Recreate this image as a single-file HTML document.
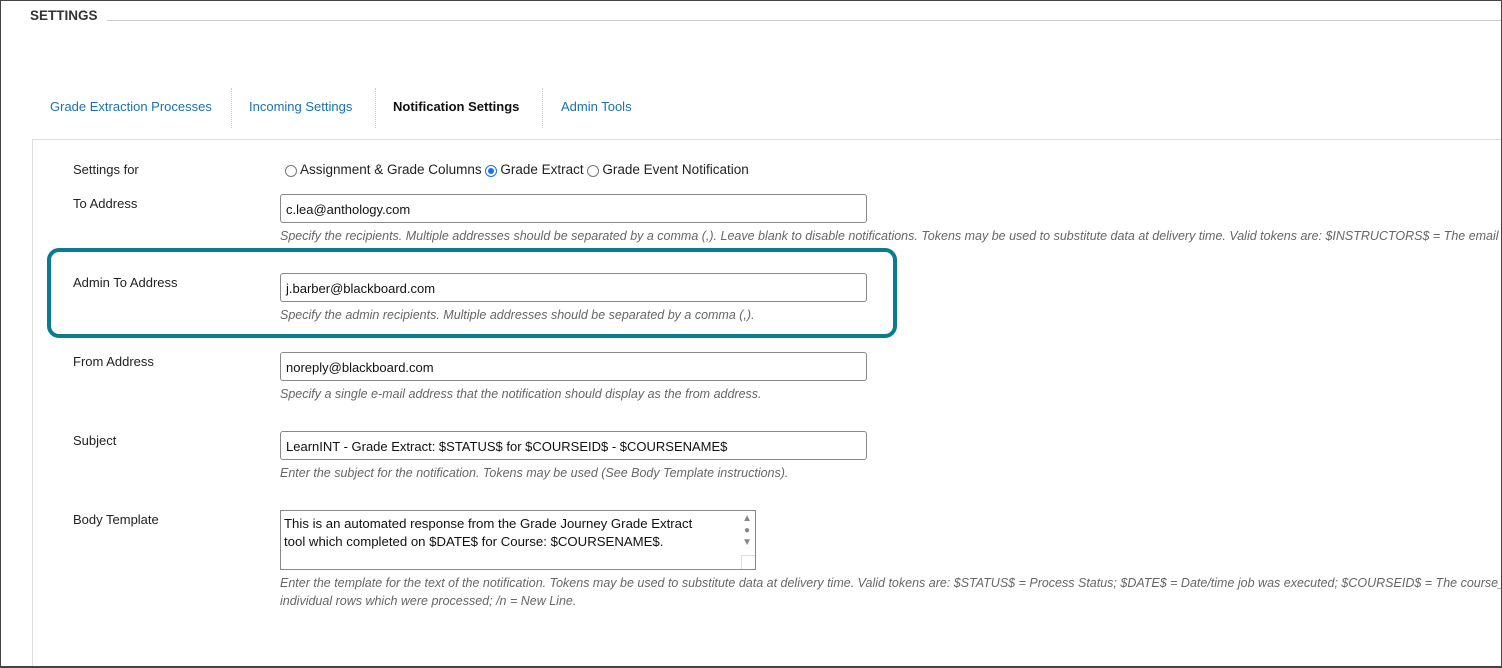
<!DOCTYPE html>
<html><head><meta charset="utf-8"><style>
*{box-sizing:border-box;margin:0;padding:0}
body{width:1502px;height:668px;overflow:hidden;background:#fff;font-family:"Liberation Sans",sans-serif;color:#222;position:relative}
#frame{position:absolute;left:0;top:0;width:1502px;height:668px;overflow:hidden}
#bd{position:absolute;left:0;top:0;width:1502px;height:668px;border:1px solid #444;border-bottom-width:2px;z-index:5}
.a{position:absolute;white-space:nowrap}
.lbl{font-size:13px;color:#222}
.tab{font-size:13px;color:#1a73a8;top:99px}
.sep{position:absolute;top:88px;height:40px;border-left:1px dotted #ccc}
.inp{position:absolute;left:280px;width:587px;height:29px;border:1px solid #888;border-radius:3px;font-size:13px;padding:7px 0 0 5px;color:#111;background:#fff}
.help{position:absolute;left:280px;font-size:12.5px;font-style:italic;color:#666;white-space:nowrap}
.rad{display:inline-block;width:12px;height:12px;border:1px solid #777;border-radius:50%;vertical-align:-2px;margin:0 3px 0 0;position:relative;top:1px}
.rad.on{border-color:#1a73e8}
.rad.on::after{content:"";position:absolute;left:2px;top:2px;width:6px;height:6px;border-radius:50%;background:#1a73e8}
</style></head><body><div id="frame">
<div class="a" style="left:30px;top:8px;font-size:13.5px;font-weight:bold;color:#333">SETTINGS</div>
<div style="position:absolute;left:107px;top:20px;right:0;border-top:1px solid #ccc"></div>

<div class="a tab" style="left:50px">Grade Extraction Processes</div>
<div class="sep" style="left:231px"></div>
<div class="a tab" style="left:249px">Incoming Settings</div>
<div class="sep" style="left:375px"></div>
<div class="a tab" style="left:393px;color:#111;font-weight:bold">Notification Settings</div>
<div class="sep" style="left:542px"></div>
<div class="a tab" style="left:561px">Admin Tools</div>

<div style="position:absolute;left:32px;top:139px;width:1480px;height:540px;border:1px solid #ddd"></div>

<div class="a lbl" style="left:73px;top:162px">Settings for</div>
<div class="a" style="left:285px;top:162px;font-size:13.5px;color:#222"><span class="rad"></span>Assignment &amp; Grade Columns <span class="rad on"></span>Grade Extract <span class="rad"></span>Grade Event Notification</div>

<div class="a lbl" style="left:73px;top:196px">To Address</div>
<div class="inp" style="top:194px">c.lea@anthology.com</div>
<div class="help" style="top:229px">Specify the recipients. Multiple addresses should be separated by a comma (,). Leave blank to disable notifications. Tokens may be used to substitute data at delivery time. Valid tokens are: $INSTRUCTORS$ = The email address</div>

<div style="position:absolute;left:47px;top:248px;width:850px;height:90px;border:4px solid #0b7c90;border-radius:12px"></div>
<div class="a lbl" style="left:73px;top:275px">Admin To Address</div>
<div class="inp" style="top:273px">j.barber@blackboard.com</div>
<div class="help" style="top:308px">Specify the admin recipients. Multiple addresses should be separated by a comma (,).</div>

<div class="a lbl" style="left:73px;top:354px">From Address</div>
<div class="inp" style="top:352px">noreply@blackboard.com</div>
<div class="help" style="top:387px">Specify a single e-mail address that the notification should display as the from address.</div>

<div class="a lbl" style="left:73px;top:433px">Subject</div>
<div class="inp" style="top:431px">LearnINT - Grade Extract: $STATUS$ for $COURSEID$ - $COURSENAME$</div>
<div class="help" style="top:466px">Enter the subject for the notification. Tokens may be used (See Body Template instructions).</div>

<div class="a lbl" style="left:73px;top:512px">Body Template</div>
<div style="position:absolute;left:280px;top:510px;width:476px;height:60px;border:1px solid #888;font-size:13.2px;line-height:18px;padding:4px 0 0 3px;color:#111">This is an automated response from the Grade Journey Grade Extract<br>tool which completed on $DATE$ for Course: $COURSENAME$.
<div style="position:absolute;right:3px;top:2px;font-size:10px;color:#888;line-height:12px;text-align:center">▲<br>●<br>▼</div>
<div style="position:absolute;right:0;bottom:0;width:14px;height:14px;border-left:1px solid #ddd;border-top:1px solid #ddd"></div></div>
<div class="help" style="top:574px;line-height:18px">Enter the template for the text of the notification. Tokens may be used to substitute data at delivery time. Valid tokens are: $STATUS$ = Process Status; $DATE$ = Date/time job was executed; $COURSEID$ = The course_id for the course<br>individual rows which were processed; /n = New Line.</div>
</div><div id="bd"></div></body></html>
